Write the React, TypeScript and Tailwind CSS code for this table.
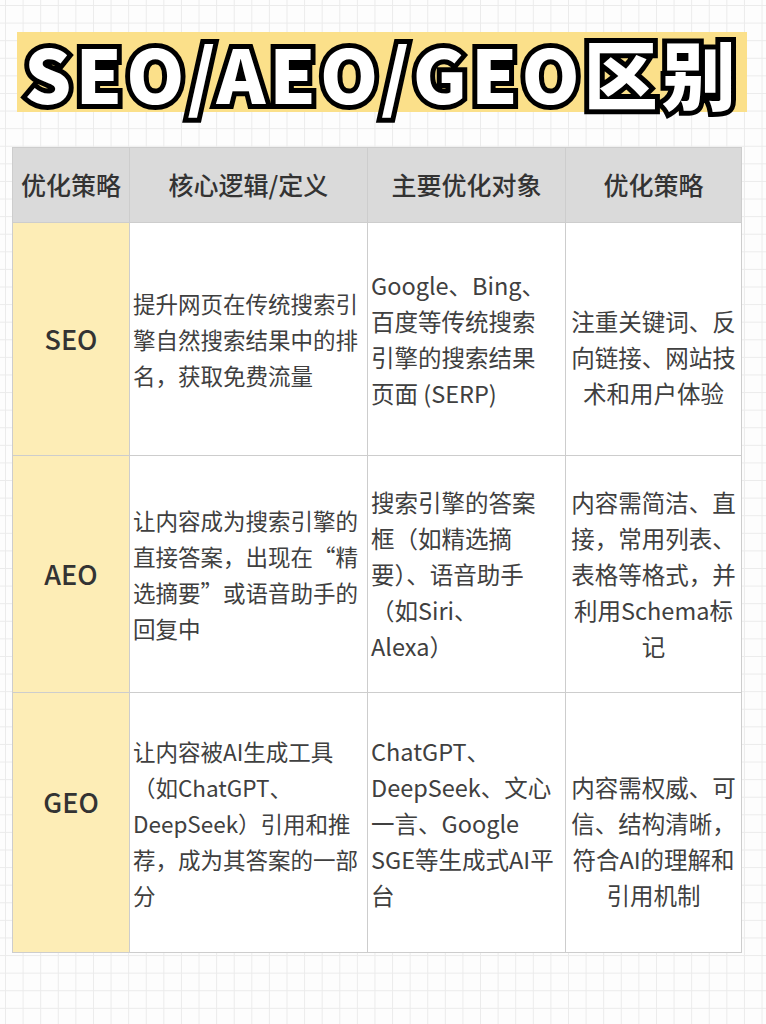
const rows = [
  {
    label: "SEO",
    labelPad: "",
    def: ["提升网页在传统搜索引", "擎自然搜索结果中的排", "名，获取免费流量"],
    target: ["Google、Bing、", "百度等传统搜索", "引擎的搜索结果", "页面 (SERP)"],
    strategy: ["注重关键词、反", "向链接、网站技", "术和用户体验"],
    strategyPad: "pt-9",
  },
  {
    label: "AEO",
    labelPad: "",
    def: ["让内容成为搜索引擎的", "直接答案，出现在“精", "选摘要”或语音助手的", "回复中"],
    target: ["搜索引擎的答案", "框（如精选摘", "要）、语音助手", "（如Siri、", "Alexa）"],
    strategy: ["内容需简洁、直", "接，常用列表、", "表格等格式，并", "利用Schema标", "记"],
    strategyPad: "",
  },
  {
    label: "GEO",
    labelPad: "pb-10",
    def: ["让内容被AI生成工具", "（如ChatGPT、", "DeepSeek）引用和推", "荐，成为其答案的一部", "分"],
    target: ["ChatGPT、", "DeepSeek、文心", "一言、Google", "SGE等生成式AI平", "台"],
    strategy: ["内容需权威、可", "信、结构清晰，", "符合AI的理解和", "引用机制"],
    strategyPad: "pt-9",
  },
];

function Lines({ items }: { items: string[] }) {
  return (
    <>
      {items.map((t, i) => (
        <div key={i} className="whitespace-nowrap">
          {t}
        </div>
      ))}
    </>
  );
}

export default function App() {
  return (
    <div
      className="w-[766px] h-[1024px] overflow-hidden bg-[#fdfdfd] bg-[linear-gradient(to_right,#ebebeb_1px,transparent_1px),linear-gradient(to_bottom,#ebebeb_1px,transparent_1px)] [background-size:17.6px_17.6px] [background-position:5px_5px] flex flex-col"
      style={{ fontFamily: '"Noto Sans CJK SC", "Noto Sans", sans-serif' }}
    >
      {/* title */}
      <div className="ml-[17px] mt-[32px] w-[730px] h-[80px] bg-[#fbe08a] flex items-center justify-center">
        <h1 className="text-[74px] leading-none font-black text-white tracking-[4px] [-webkit-text-stroke:10px_#000] [paint-order:stroke_fill] whitespace-nowrap">
          SEO/AEO/GEO区别
        </h1>
      </div>

      {/* table */}
      <div className="ml-[12px] mt-[35px] w-[730px] grid grid-cols-[116px_237px_197px_175px] grid-rows-[74px_232px_236px_259px] gap-px p-px bg-[#cdcdcd] text-[#404040]">
        {["优化策略", "核心逻辑/定义", "主要优化对象", "优化策略"].map((h, i) => (
          <div
            key={i}
            className="bg-[#dadada] flex items-center justify-center text-[25px] font-medium text-[#333]"
          >
            {h}
          </div>
        ))}
        {rows.map((r) => (
          <>
            <div
              key={r.label}
              className={`bg-[#fdedb6] flex items-center justify-center text-[27px] font-medium text-[#333] ${r.labelPad}`}
            >
              {r.label}
            </div>
            <div className="bg-white flex flex-col justify-center pl-[3px] text-[22.5px] leading-[36px]">
              <Lines items={r.def} />
            </div>
            <div className="bg-white flex flex-col justify-center pl-[3px] text-[23.5px] leading-[36px]">
              <Lines items={r.target} />
            </div>
            <div
              className={`bg-white flex flex-col justify-center items-center text-center text-[23.5px] leading-[36px] ${r.strategyPad}`}
            >
              <Lines items={r.strategy} />
            </div>
          </>
        ))}
      </div>
    </div>
  );
}
